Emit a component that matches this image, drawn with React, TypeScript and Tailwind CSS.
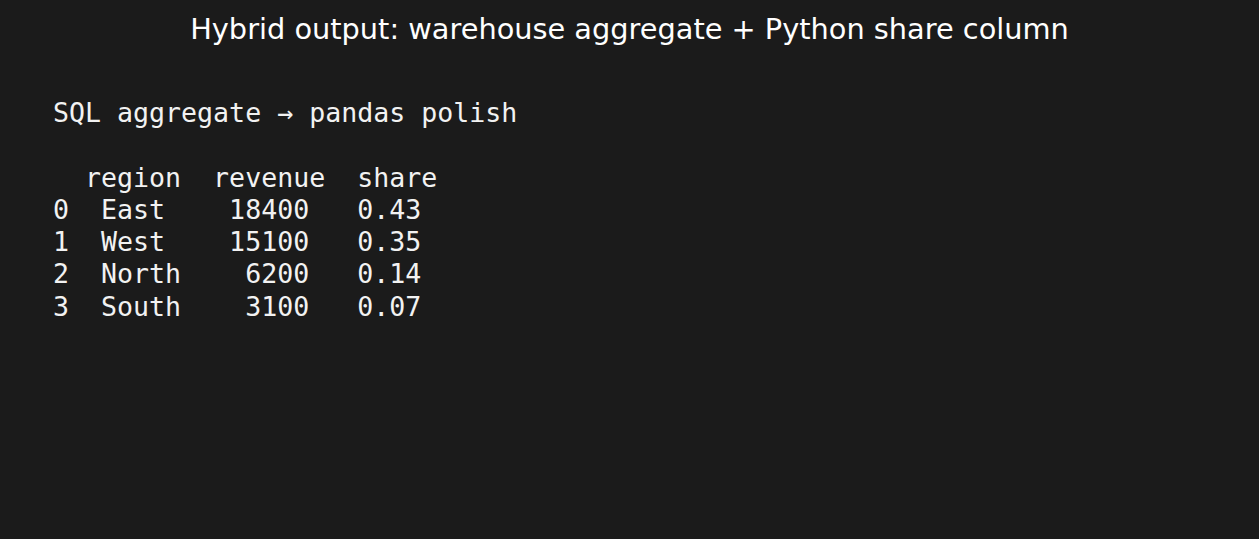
export default function App() {
  const lines = [
    "SQL aggregate → pandas polish",
    "",
    "  region  revenue  share",
    "0  East    18400   0.43",
    "1  West    15100   0.35",
    "2  North    6200   0.14",
    "3  South    3100   0.07",
  ];
  return (
    <div className="w-[1259px] h-[539px] bg-[#1b1b1b] text-white overflow-hidden flex flex-col">
      <div className="text-center text-[28.8px] leading-[32px] pt-[13px] font-['DejaVu_Sans',sans-serif]">
        Hybrid output: warehouse aggregate + Python share column
      </div>
      <pre className="mt-[52px] ml-[53px] text-[26.6px] leading-[32.3px] text-[#f2f2f2] font-['DejaVu_Sans_Mono',monospace]">
        {lines.join("\n")}
      </pre>
    </div>
  );
}
